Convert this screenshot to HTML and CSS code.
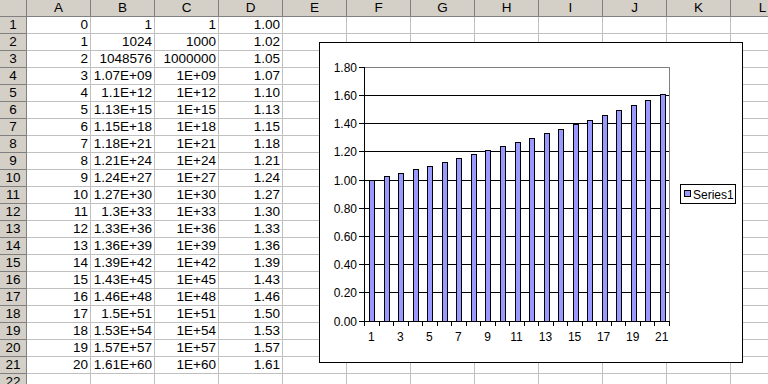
FILE: index.html
```html
<!DOCTYPE html>
<html>
<head>
<meta charset="utf-8">
<link rel="stylesheet" href="styles.css">
</head>
<body>
<div class="sheet">
  <div class="grid">
    <div class="hd corner"></div>
    <div class="hd">A</div><div class="hd">B</div><div class="hd">C</div><div class="hd">D</div><div class="hd">E</div><div class="hd">F</div><div class="hd">G</div><div class="hd">H</div><div class="hd">I</div><div class="hd">J</div><div class="hd">K</div><div class="hd">L</div>

    <div class="rh">1</div><div class="c">0</div><div class="c">1</div><div class="c">1</div><div class="c">1.00</div><div class="c"></div><div class="c"></div><div class="c"></div><div class="c"></div><div class="c"></div><div class="c"></div><div class="c"></div><div class="c"></div>
    <div class="rh">2</div><div class="c">1</div><div class="c">1024</div><div class="c">1000</div><div class="c">1.02</div><div class="c"></div><div class="c"></div><div class="c"></div><div class="c"></div><div class="c"></div><div class="c"></div><div class="c"></div><div class="c"></div>
    <div class="rh">3</div><div class="c">2</div><div class="c">1048576</div><div class="c">1000000</div><div class="c">1.05</div><div class="c"></div><div class="c"></div><div class="c"></div><div class="c"></div><div class="c"></div><div class="c"></div><div class="c"></div><div class="c"></div>
    <div class="rh">4</div><div class="c">3</div><div class="c">1.07E+09</div><div class="c">1E+09</div><div class="c">1.07</div><div class="c"></div><div class="c"></div><div class="c"></div><div class="c"></div><div class="c"></div><div class="c"></div><div class="c"></div><div class="c"></div>
    <div class="rh">5</div><div class="c">4</div><div class="c">1.1E+12</div><div class="c">1E+12</div><div class="c">1.10</div><div class="c"></div><div class="c"></div><div class="c"></div><div class="c"></div><div class="c"></div><div class="c"></div><div class="c"></div><div class="c"></div>
    <div class="rh">6</div><div class="c">5</div><div class="c">1.13E+15</div><div class="c">1E+15</div><div class="c">1.13</div><div class="c"></div><div class="c"></div><div class="c"></div><div class="c"></div><div class="c"></div><div class="c"></div><div class="c"></div><div class="c"></div>
    <div class="rh">7</div><div class="c">6</div><div class="c">1.15E+18</div><div class="c">1E+18</div><div class="c">1.15</div><div class="c"></div><div class="c"></div><div class="c"></div><div class="c"></div><div class="c"></div><div class="c"></div><div class="c"></div><div class="c"></div>
    <div class="rh">8</div><div class="c">7</div><div class="c">1.18E+21</div><div class="c">1E+21</div><div class="c">1.18</div><div class="c"></div><div class="c"></div><div class="c"></div><div class="c"></div><div class="c"></div><div class="c"></div><div class="c"></div><div class="c"></div>
    <div class="rh">9</div><div class="c">8</div><div class="c">1.21E+24</div><div class="c">1E+24</div><div class="c">1.21</div><div class="c"></div><div class="c"></div><div class="c"></div><div class="c"></div><div class="c"></div><div class="c"></div><div class="c"></div><div class="c"></div>
    <div class="rh">10</div><div class="c">9</div><div class="c">1.24E+27</div><div class="c">1E+27</div><div class="c">1.24</div><div class="c"></div><div class="c"></div><div class="c"></div><div class="c"></div><div class="c"></div><div class="c"></div><div class="c"></div><div class="c"></div>
    <div class="rh">11</div><div class="c">10</div><div class="c">1.27E+30</div><div class="c">1E+30</div><div class="c">1.27</div><div class="c"></div><div class="c"></div><div class="c"></div><div class="c"></div><div class="c"></div><div class="c"></div><div class="c"></div><div class="c"></div>
    <div class="rh">12</div><div class="c">11</div><div class="c">1.3E+33</div><div class="c">1E+33</div><div class="c">1.30</div><div class="c"></div><div class="c"></div><div class="c"></div><div class="c"></div><div class="c"></div><div class="c"></div><div class="c"></div><div class="c"></div>
    <div class="rh">13</div><div class="c">12</div><div class="c">1.33E+36</div><div class="c">1E+36</div><div class="c">1.33</div><div class="c"></div><div class="c"></div><div class="c"></div><div class="c"></div><div class="c"></div><div class="c"></div><div class="c"></div><div class="c"></div>
    <div class="rh">14</div><div class="c">13</div><div class="c">1.36E+39</div><div class="c">1E+39</div><div class="c">1.36</div><div class="c"></div><div class="c"></div><div class="c"></div><div class="c"></div><div class="c"></div><div class="c"></div><div class="c"></div><div class="c"></div>
    <div class="rh">15</div><div class="c">14</div><div class="c">1.39E+42</div><div class="c">1E+42</div><div class="c">1.39</div><div class="c"></div><div class="c"></div><div class="c"></div><div class="c"></div><div class="c"></div><div class="c"></div><div class="c"></div><div class="c"></div>
    <div class="rh">16</div><div class="c">15</div><div class="c">1.43E+45</div><div class="c">1E+45</div><div class="c">1.43</div><div class="c"></div><div class="c"></div><div class="c"></div><div class="c"></div><div class="c"></div><div class="c"></div><div class="c"></div><div class="c"></div>
    <div class="rh">17</div><div class="c">16</div><div class="c">1.46E+48</div><div class="c">1E+48</div><div class="c">1.46</div><div class="c"></div><div class="c"></div><div class="c"></div><div class="c"></div><div class="c"></div><div class="c"></div><div class="c"></div><div class="c"></div>
    <div class="rh">18</div><div class="c">17</div><div class="c">1.5E+51</div><div class="c">1E+51</div><div class="c">1.50</div><div class="c"></div><div class="c"></div><div class="c"></div><div class="c"></div><div class="c"></div><div class="c"></div><div class="c"></div><div class="c"></div>
    <div class="rh">19</div><div class="c">18</div><div class="c">1.53E+54</div><div class="c">1E+54</div><div class="c">1.53</div><div class="c"></div><div class="c"></div><div class="c"></div><div class="c"></div><div class="c"></div><div class="c"></div><div class="c"></div><div class="c"></div>
    <div class="rh">20</div><div class="c">19</div><div class="c">1.57E+57</div><div class="c">1E+57</div><div class="c">1.57</div><div class="c"></div><div class="c"></div><div class="c"></div><div class="c"></div><div class="c"></div><div class="c"></div><div class="c"></div><div class="c"></div>
    <div class="rh">21</div><div class="c">20</div><div class="c">1.61E+60</div><div class="c">1E+60</div><div class="c">1.61</div><div class="c"></div><div class="c"></div><div class="c"></div><div class="c"></div><div class="c"></div><div class="c"></div><div class="c"></div><div class="c"></div>
    <div class="rh">22</div><div class="c"></div><div class="c"></div><div class="c"></div><div class="c"></div><div class="c"></div><div class="c"></div><div class="c"></div><div class="c"></div><div class="c"></div><div class="c"></div><div class="c"></div><div class="c"></div>
  </div>

  <div class="chart">
    <svg class="chart-svg" width="422" height="319" viewBox="320 43 422 319" shape-rendering="crispEdges">
      <g stroke="#000" stroke-width="1">
        <line x1="364" y1="95.5" x2="669" y2="95.5"/>
        <line x1="364" y1="123.5" x2="669" y2="123.5"/>
        <line x1="364" y1="151.5" x2="669" y2="151.5"/>
        <line x1="364" y1="180.5" x2="669" y2="180.5"/>
        <line x1="364" y1="208.5" x2="669" y2="208.5"/>
        <line x1="364" y1="236.5" x2="669" y2="236.5"/>
        <line x1="364" y1="264.5" x2="669" y2="264.5"/>
        <line x1="364" y1="292.5" x2="669" y2="292.5"/>
      </g>
      <g stroke="#808080" stroke-width="1">
        <line x1="364" y1="67.5" x2="670" y2="67.5"/>
        <line x1="669.5" y1="67" x2="669.5" y2="321"/>
      </g>
      <g fill="#9999ff" stroke="#000" stroke-width="1">
        <rect x="369.5" y="180.5" width="5" height="140.5"/>
        <rect x="384.5" y="176.5" width="5" height="144.5"/>
        <rect x="398.5" y="173.5" width="5" height="147.5"/>
        <rect x="413.5" y="169.5" width="5" height="151.5"/>
        <rect x="427.5" y="166.5" width="5" height="154.5"/>
        <rect x="442.5" y="162.5" width="5" height="158.5"/>
        <rect x="456.5" y="158.5" width="5" height="162.5"/>
        <rect x="471.5" y="154.5" width="5" height="166.5"/>
        <rect x="485.5" y="150.5" width="5" height="170.5"/>
        <rect x="500.5" y="146.5" width="5" height="174.5"/>
        <rect x="515.5" y="142.5" width="5" height="178.5"/>
        <rect x="529.5" y="138.5" width="5" height="182.5"/>
        <rect x="544.5" y="133.5" width="5" height="187.5"/>
        <rect x="558.5" y="129.5" width="5" height="191.5"/>
        <rect x="573.5" y="124.5" width="5" height="196.5"/>
        <rect x="587.5" y="120.5" width="5" height="200.5"/>
        <rect x="602.5" y="115.5" width="5" height="205.5"/>
        <rect x="616.5" y="110.5" width="5" height="210.5"/>
        <rect x="631.5" y="105.5" width="5" height="215.5"/>
        <rect x="645.5" y="100.5" width="5" height="220.5"/>
        <rect x="660.5" y="94.5" width="5" height="226.5"/>
      </g>
      <g stroke="#000" stroke-width="1">
        <line x1="364.5" y1="67" x2="364.5" y2="322"/>
        <line x1="364" y1="321.5" x2="670" y2="321.5"/>
        <line x1="359" y1="67.5" x2="364" y2="67.5"/>
        <line x1="359" y1="95.5" x2="364" y2="95.5"/>
        <line x1="359" y1="123.5" x2="364" y2="123.5"/>
        <line x1="359" y1="151.5" x2="364" y2="151.5"/>
        <line x1="359" y1="180.5" x2="364" y2="180.5"/>
        <line x1="359" y1="208.5" x2="364" y2="208.5"/>
        <line x1="359" y1="236.5" x2="364" y2="236.5"/>
        <line x1="359" y1="264.5" x2="364" y2="264.5"/>
        <line x1="359" y1="292.5" x2="364" y2="292.5"/>
        <line x1="359" y1="321.5" x2="364" y2="321.5"/>
        <line x1="364.5" y1="321" x2="364.5" y2="326"/>
        <line x1="379.5" y1="321" x2="379.5" y2="326"/>
        <line x1="393.5" y1="321" x2="393.5" y2="326"/>
        <line x1="408.5" y1="321" x2="408.5" y2="326"/>
        <line x1="422.5" y1="321" x2="422.5" y2="326"/>
        <line x1="437.5" y1="321" x2="437.5" y2="326"/>
        <line x1="451.5" y1="321" x2="451.5" y2="326"/>
        <line x1="466.5" y1="321" x2="466.5" y2="326"/>
        <line x1="480.5" y1="321" x2="480.5" y2="326"/>
        <line x1="495.5" y1="321" x2="495.5" y2="326"/>
        <line x1="509.5" y1="321" x2="509.5" y2="326"/>
        <line x1="524.5" y1="321" x2="524.5" y2="326"/>
        <line x1="538.5" y1="321" x2="538.5" y2="326"/>
        <line x1="553.5" y1="321" x2="553.5" y2="326"/>
        <line x1="567.5" y1="321" x2="567.5" y2="326"/>
        <line x1="582.5" y1="321" x2="582.5" y2="326"/>
        <line x1="596.5" y1="321" x2="596.5" y2="326"/>
        <line x1="611.5" y1="321" x2="611.5" y2="326"/>
        <line x1="625.5" y1="321" x2="625.5" y2="326"/>
        <line x1="640.5" y1="321" x2="640.5" y2="326"/>
        <line x1="654.5" y1="321" x2="654.5" y2="326"/>
        <line x1="669.5" y1="321" x2="669.5" y2="326"/>
      </g>
      <g class="axis-text" text-anchor="end">
        <text x="357" y="72">1.80</text>
        <text x="357" y="100">1.60</text>
        <text x="357" y="128">1.40</text>
        <text x="357" y="156">1.20</text>
        <text x="357" y="185">1.00</text>
        <text x="357" y="213">0.80</text>
        <text x="357" y="241">0.60</text>
        <text x="357" y="269">0.40</text>
        <text x="357" y="297">0.20</text>
        <text x="357" y="326">0.00</text>
      </g>
      <g class="axis-text" text-anchor="middle">
        <text x="371.3" y="341">1</text>
        <text x="400.3" y="341">3</text>
        <text x="429.4" y="341">5</text>
        <text x="458.4" y="341">7</text>
        <text x="487.5" y="341">9</text>
        <text x="516.5" y="341">11</text>
        <text x="545.5" y="341">13</text>
        <text x="574.6" y="341">15</text>
        <text x="603.6" y="341">17</text>
        <text x="632.7" y="341">19</text>
        <text x="661.7" y="341">21</text>
      </g>
      <rect x="680.5" y="184.5" width="55" height="19" fill="#fff" stroke="#000"/>
      <rect x="684.5" y="190.5" width="6" height="6" fill="#9999ff" stroke="#000"/>
      <text class="axis-text" x="693" y="198.5">Series1</text>
    </svg>
  </div>
</div>
</body>
</html>
```
FILE: styles.css
```css
html, body {
  margin: 0;
  padding: 0;
  background: #ffffff;
}

body {
  width: 768px;
  height: 384px;
  overflow: hidden;
  font-family: "Liberation Sans", Arial, sans-serif;
}

.sheet {
  position: relative;
  width: 768px;
  height: 384px;
  overflow: hidden;
}

.grid {
  display: grid;
  grid-template-columns: 27px repeat(12, 64px);
  grid-auto-rows: 17px;
  width: 795px;
  font-size: 13.5px;
  color: #000;
}

.grid > div {
  box-sizing: border-box;
  line-height: 16px;
  white-space: nowrap;
  overflow: hidden;
}

.hd {
  background: #d4d0c8;
  border-right: 1px solid #808080;
  border-bottom: 1px solid #808080;
  text-align: center;
}

.rh {
  background: #d4d0c8;
  border-right: 1px solid #808080;
  border-bottom: 1px solid #808080;
  text-align: center;
}

.c {
  background: #fff;
  border-right: 1px solid #c0c0c0;
  border-bottom: 1px solid #c0c0c0;
  text-align: right;
  padding-right: 2px;
}

.chart {
  position: absolute;
  left: 319px;
  top: 42px;
  width: 422px;
  height: 319px;
  border: 1px solid #000;
  background: #fff;
}

.chart-svg {
  display: block;
}

.axis-text {
  font-family: "Liberation Sans", Arial, sans-serif;
  font-size: 12px;
  fill: #000;
}
```
